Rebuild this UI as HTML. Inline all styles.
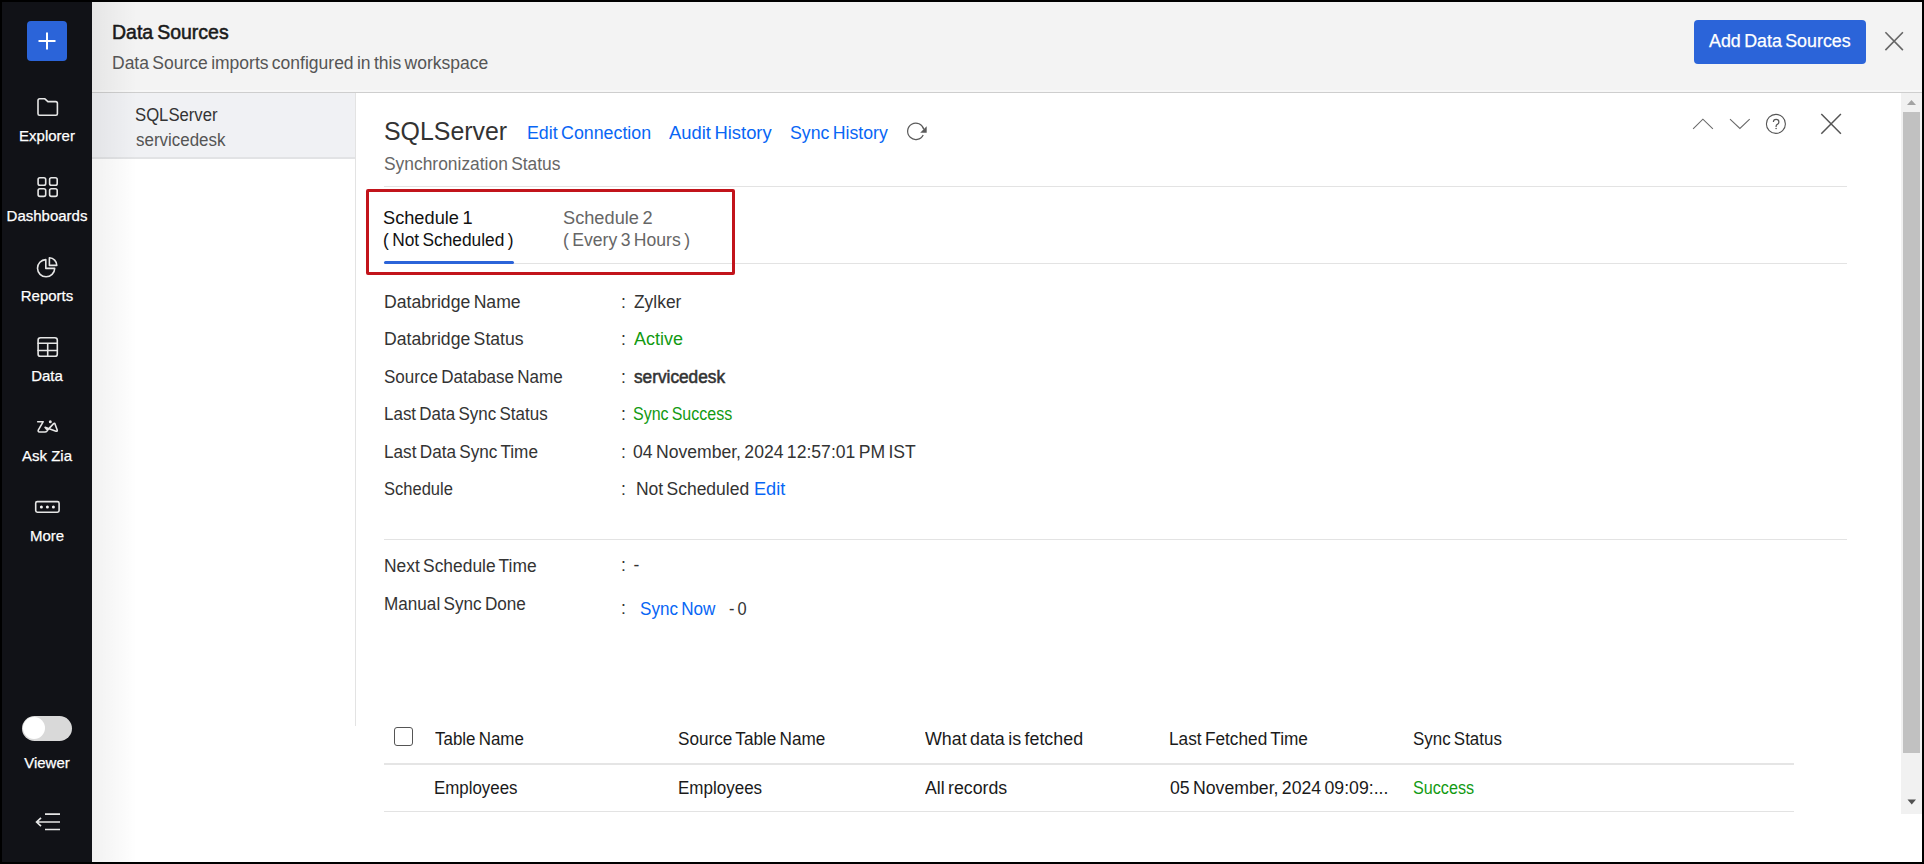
<!DOCTYPE html>
<html><head><meta charset="utf-8">
<style>
*{box-sizing:border-box;margin:0;padding:0}
html,body{width:1924px;height:864px;overflow:hidden;background:#000;font-family:"Liberation Sans",sans-serif;position:relative}
.a{position:absolute}
.t{position:absolute;white-space:nowrap;font-size:17.5px;line-height:17.5px;color:#333;word-spacing:-1.5px;transform-origin:0 0}
#page{left:2px;top:2px;width:1920px;height:860px;background:#fff}
#side{left:2px;top:2px;width:90px;height:860px;background:#111217}
#hdr{left:92px;top:2px;width:1830px;height:91px;background:#f3f3f3;border-bottom:1px solid #cecece;box-shadow:inset 0 -2px 0 #f7f7f7}
#shadow{left:92px;top:2px;width:45px;height:860px;background:linear-gradient(to right,rgba(0,0,0,0.055),rgba(0,0,0,0))}
#list{left:92px;top:93px;width:264px;height:633px;border-right:1px solid #e3e3e3}
#sel{left:92px;top:93px;width:263px;height:66px;background:#f0f1f4;border-bottom:2px solid #e2e3e5}
.lbl{position:absolute;white-space:nowrap;color:#fff;font-size:15px;line-height:15px;text-align:center;width:90px;left:2px;-webkit-text-stroke:0.25px #fff}
.blue{color:#1a6ee6}
.green{color:#1d9a2c}
.ln{position:absolute;height:1px;background:#e3e3e3}
#sb{left:1901px;top:93px;width:21px;height:721px;background:#f1f1f1}
#thumb{left:1903px;top:112px;width:17px;height:641px;background:#c1c1c1}
</style></head><body>
<div class="a" id="page"></div>
<div class="a" id="hdr"></div>
<div class="a" id="list"></div>
<div class="a" id="sel"></div>
<div class="a" id="shadow"></div>
<div class="a" id="side"></div>

<!-- ===== sidebar ===== -->
<div class="a" style="left:27px;top:21px;width:40px;height:40px;background:#2b64d9;border-radius:4px"></div>
<svg class="a" style="left:27px;top:21px" width="40" height="40"><path d="M20 11.5v17M11.5 20h17" stroke="#fff" stroke-width="2"/></svg>

<svg class="a" style="left:0;top:0" width="92" height="864" fill="none" stroke="#e6e6e6" stroke-width="1.6" stroke-linejoin="round" stroke-linecap="round">
  <!-- folder -->
  <path d="M38 100.5q0-1.7 1.7-1.7h5.2l3 2.8h7.8q1.7 0 1.7 1.7v10.4q0 1.5-1.5 1.5h-16.4q-1.5 0-1.5-1.5z"/>
  <!-- dashboards -->
  <rect x="38.1" y="177.7" width="7.6" height="7.6" rx="1.8"/>
  <rect x="49.6" y="177.7" width="7.6" height="7.6" rx="1.8"/>
  <rect x="38.1" y="188.8" width="7.6" height="7.6" rx="1.8"/>
  <rect x="49.6" y="188.8" width="7.6" height="7.6" rx="1.8"/>
  <!-- reports -->
  <path d="M45.8 259.6A8.6 8.6 0 1 0 54.7 268.4H45.8Z"/>
  <path d="M49.4 257.8v7.6h7.4A7.6 7.6 0 0 0 49.4 257.8Z"/>
  <!-- data -->
  <rect x="38.1" y="337.7" width="19.2" height="18.6" rx="2.4"/>
  <path d="M38.1 343.3h19.2M38.1 350.5h19.2M47.7 343.3v13"/>
  <!-- zia -->
  <path d="M37.7 421.7H43.2L38.4 429.8Q37.6 431.9 39.5 432H45Q46.2 432 47 431L48 429.6M45.1 427.3Q46.3 429.5 48 429.6L53.6 423.6Q54.5 422.8 55 423.9L57.2 430Q57.5 431.6 56 431.2Z"/>
  <circle cx="50.3" cy="421.8" r="0.7" fill="#e6e6e6"/>
  <!-- more -->
  <rect x="35.7" y="501.6" width="23.4" height="10.6" rx="1.6"/>
</svg>
<svg class="a" style="left:0;top:0" width="92" height="864" fill="#f4f4f4">
  <circle cx="41.4" cy="507" r="1.5"/><circle cx="47.4" cy="507" r="1.5"/><circle cx="53.4" cy="507" r="1.5"/>
</svg>

<div class="lbl" style="top:128px">Explorer</div>
<div class="lbl" style="top:208px">Dashboards</div>
<div class="lbl" style="top:288px">Reports</div>
<div class="lbl" style="top:368px">Data</div>
<div class="lbl" style="top:448px">Ask Zia</div>
<div class="lbl" style="top:528px">More</div>

<div class="a" style="left:22px;top:716px;width:50px;height:25px;border-radius:13px;background:#d9d9d9"></div>
<div class="a" style="left:23px;top:717px;width:22px;height:22px;border-radius:11px;background:#fff"></div>
<div class="lbl" style="top:755px">Viewer</div>
<svg class="a" style="left:0;top:800px" width="92" height="40" fill="none" stroke="#e6e6e6" stroke-width="1.7">
  <path d="M45 14.2h15M36.5 22h23.5M45 29.5h15M41 17.8l-4.4 4.2l4.4 4.2"/>
</svg>

<!-- header shapes -->
<div class="a" style="left:1694px;top:20px;width:172px;height:44px;background:#2b64d9;border-radius:4px"></div>
<svg class="a" style="left:1880px;top:28px" width="28" height="28" stroke="#666" stroke-width="1.6"><path d="M5.4 4.2L22.9 22.1M22.9 4.2L5.4 22.1"/></svg>

<!-- scrollbar -->
<div class="a" id="sb"></div>
<div class="a" id="thumb"></div>
<svg class="a" style="left:1901px;top:94px" width="21" height="20"><path d="M6 11h9l-4.5-5z" fill="#a3a3a3"/></svg>
<svg class="a" style="left:1901px;top:793px" width="21" height="20"><path d="M6.5 6.5h8.5l-4.25 5z" fill="#505050"/></svg>

<!-- refresh icon -->
<svg class="a" style="left:904px;top:120px" width="26" height="24" fill="none" stroke="#5a5a5a" stroke-width="1.25">
  <path d="M19.2 14.9A8.2 8.2 0 1 1 19.8 9.4"/>
  <path d="M22.7 6.3V12.7H16.2z" fill="#5a5a5a" stroke="none"/>
</svg>

<!-- right icons -->
<svg class="a" style="left:1688px;top:110px" width="160" height="30" fill="none" stroke="#6a6a6a" stroke-width="1.1">
  <path d="M5.1 18.8l9.8-9.6l10 9.6"/>
  <path d="M42 9.2l9.9 9.3l9.8-9.3"/>
  <circle cx="87.9" cy="13.9" r="9.5" stroke="#555" stroke-width="1.1"/>
  <path d="M85.4 12.1q0-2.8 2.7-2.8q2.8 0 2.8 2.6q0 1.6-1.6 2.5q-1.2 0.6-1.2 1.9v0.7" stroke="#555" stroke-width="1.2"/>
  <circle cx="88.1" cy="18.5" r="0.8" fill="#555" stroke="none"/>
  <path d="M133.3 4l19.6 19.7M152.9 4l-19.6 19.7" stroke="#555" stroke-width="1.5"/>
</svg>

<!-- lines -->
<div class="ln" style="left:384px;top:186px;width:1463px"></div>
<div class="ln" style="left:384px;top:263px;width:1463px"></div>
<div class="a" style="left:384px;top:261px;width:130px;height:3px;border-radius:2px;background:#2b64d9"></div>
<div class="a" style="left:366px;top:189px;width:369px;height:86px;border:3px solid #c2141b;border-radius:2px"></div>
<div class="ln" style="left:384px;top:539px;width:1463px"></div>

<!-- table shapes -->
<div class="a" style="left:394px;top:727px;width:19px;height:19px;border:1.3px solid #555;border-radius:3px;background:#fff"></div>
<div class="a" style="left:384px;top:763px;width:1410px;height:2px;background:#e5e5e5"></div>
<div class="ln" style="left:384px;top:811px;width:1410px"></div>

<!-- texts -->
<div class="t" style="left:112.07px;top:21px;font-size:21px;line-height:21px;color:#1a1a1a;font-weight:400;transform:scaleX(0.9280);-webkit-text-stroke:0.55px #1a1a1a">Data Sources</div>
<div class="t" style="left:112.00px;top:55px;font-size:17.5px;line-height:17.5px;color:#555;font-weight:400">Data Source imports configured in this workspace</div>
<div class="t" style="left:135.05px;top:107px;font-size:17.5px;line-height:17.5px;color:#333;font-weight:400;transform:scaleX(0.9535)">SQLServer</div>
<div class="t" style="left:136.00px;top:132px;font-size:17.5px;line-height:17.5px;color:#555;font-weight:400;transform:scaleX(0.9677)">servicedesk</div>
<div class="t" style="left:384.00px;top:119px;font-size:25px;line-height:25px;color:#333;font-weight:400;transform:scaleX(0.9959)">SQLServer</div>
<div class="t" style="left:526.98px;top:125px;font-size:17.5px;line-height:17.5px;color:#0866f5;font-weight:400;transform:scaleX(1.0167)">Edit Connection</div>
<div class="t" style="left:669.00px;top:125px;font-size:17.5px;line-height:17.5px;color:#0866f5;font-weight:400;transform:scaleX(1.0510)">Audit History</div>
<div class="t" style="left:790.49px;top:125px;font-size:17.5px;line-height:17.5px;color:#0866f5;font-weight:400;transform:scaleX(1.0104)">Sync History</div>
<div class="t" style="left:384.01px;top:156px;font-size:17.5px;line-height:17.5px;color:#666;font-weight:400;transform:scaleX(0.9943)">Synchronization Status</div>
<div class="t" style="left:382.99px;top:209px;font-size:18px;line-height:18px;color:#111;font-weight:400;transform:scaleX(1.0115)">Schedule 1</div>
<div class="t" style="left:383.04px;top:231px;font-size:18px;line-height:18px;color:#111;font-weight:400;transform:scaleX(0.9627)">( Not Scheduled )</div>
<div class="t" style="left:562.99px;top:209px;font-size:18px;line-height:18px;color:#666;font-weight:400;transform:scaleX(1.0115)">Schedule 2</div>
<div class="t" style="left:563.02px;top:231px;font-size:18px;line-height:18px;color:#666;font-weight:400;transform:scaleX(0.9766)">( Every 3 Hours )</div>
<div class="t" style="left:383.99px;top:294px;font-size:17.5px;line-height:17.5px;color:#333;font-weight:400;transform:scaleX(1.0075)">Databridge Name</div>
<div class="t" style="left:383.99px;top:331px;font-size:17.5px;line-height:17.5px;color:#333;font-weight:400;transform:scaleX(1.0073)">Databridge Status</div>
<div class="t" style="left:384.03px;top:369px;font-size:17.5px;line-height:17.5px;color:#333;font-weight:400;transform:scaleX(0.9725)">Source Database Name</div>
<div class="t" style="left:384.03px;top:406px;font-size:17.5px;line-height:17.5px;color:#333;font-weight:400;transform:scaleX(0.9702)">Last Data Sync Status</div>
<div class="t" style="left:384.02px;top:444px;font-size:17.5px;line-height:17.5px;color:#333;font-weight:400;transform:scaleX(0.9808)">Last Data Sync Time</div>
<div class="t" style="left:384.06px;top:481px;font-size:17.5px;line-height:17.5px;color:#333;font-weight:400;transform:scaleX(0.9444)">Schedule</div>
<div class="t" style="left:633.80px;top:294px;font-size:17.5px;line-height:17.5px;color:#333;font-weight:400;transform:scaleX(0.9938)">Zylker</div>
<div class="t" style="left:633.50px;top:331px;font-size:17.5px;line-height:17.5px;color:#129a12;font-weight:400;transform:scaleX(1.0277)">Active</div>
<div class="t" style="left:633.50px;top:369px;font-size:17.5px;line-height:17.5px;color:#333;font-weight:400;transform:scaleX(0.9849);-webkit-text-stroke:0.55px #333">servicedesk</div>
<div class="t" style="left:632.69px;top:406px;font-size:17.5px;line-height:17.5px;color:#129a12;font-weight:400;transform:scaleX(0.9150)">Sync Success</div>
<div class="t" style="left:633.30px;top:444px;font-size:17.5px;line-height:17.5px;color:#333;font-weight:400;transform:scaleX(1.0050)">04 November, 2024 12:57:01 PM IST</div>
<div class="t" style="left:635.90px;top:481px;font-size:17.5px;line-height:17.5px;color:#333;font-weight:400">Not Scheduled</div>
<div class="t" style="left:754.26px;top:481px;font-size:17.5px;line-height:17.5px;color:#0866f5;font-weight:400;transform:scaleX(1.0379)">Edit</div>
<div class="t" style="left:384.01px;top:558px;font-size:17.5px;line-height:17.5px;color:#333;font-weight:400;transform:scaleX(0.9934)">Next Schedule Time</div>
<div class="t" style="left:384.02px;top:596px;font-size:17.5px;line-height:17.5px;color:#333;font-weight:400;transform:scaleX(0.9792)">Manual Sync Done</div>
<div class="t" style="left:639.72px;top:601px;font-size:17.5px;line-height:17.5px;color:#0866f5;font-weight:400;transform:scaleX(0.9753)">Sync Now</div>
<div class="t" style="left:728.60px;top:601px;font-size:17.5px;line-height:17.5px;color:#333;font-weight:400;transform:scaleX(0.9368)">- 0</div>
<div class="t" style="left:434.50px;top:731px;font-size:17.5px;line-height:17.5px;color:#1a1a1a;font-weight:400;transform:scaleX(0.9674)">Table Name</div>
<div class="t" style="left:678.42px;top:731px;font-size:17.5px;line-height:17.5px;color:#1a1a1a;font-weight:400;transform:scaleX(0.9799)">Source Table Name</div>
<div class="t" style="left:924.50px;top:731px;font-size:17.5px;line-height:17.5px;color:#1a1a1a;font-weight:400;transform:scaleX(1.0195)">What data is fetched</div>
<div class="t" style="left:1168.61px;top:731px;font-size:17.5px;line-height:17.5px;color:#1a1a1a;font-weight:400;transform:scaleX(0.9857)">Last Fetched Time</div>
<div class="t" style="left:1413.03px;top:731px;font-size:17.5px;line-height:17.5px;color:#1a1a1a;font-weight:400;transform:scaleX(0.9670)">Sync Status</div>
<div class="t" style="left:433.54px;top:780px;font-size:17.5px;line-height:17.5px;color:#1a1a1a;font-weight:400;transform:scaleX(0.9647)">Employees</div>
<div class="t" style="left:678.43px;top:780px;font-size:17.5px;line-height:17.5px;color:#1a1a1a;font-weight:400;transform:scaleX(0.9718)">Employees</div>
<div class="t" style="left:924.50px;top:780px;font-size:17.5px;line-height:17.5px;color:#1a1a1a;font-weight:400;transform:scaleX(1.0123)">All records</div>
<div class="t" style="left:1169.60px;top:780px;font-size:17.5px;line-height:17.5px;color:#1a1a1a;font-weight:400;transform:scaleX(1.0093)">05 November, 2024 09:09:...</div>
<div class="t" style="left:1413.08px;top:780px;font-size:17.5px;line-height:17.5px;color:#129a12;font-weight:400;transform:scaleX(0.9231)">Success</div>
<div class="t" style="left:1709.00px;top:33px;font-size:17.5px;line-height:17.5px;color:#fff;font-weight:400;transform:scaleX(1.0187);-webkit-text-stroke:0.25px #fff">Add Data Sources</div>
<div class="t" style="left:621px;top:294px">:</div>
<div class="t" style="left:621px;top:331px">:</div>
<div class="t" style="left:621px;top:369px">:</div>
<div class="t" style="left:621px;top:406px">:</div>
<div class="t" style="left:621px;top:444px">:</div>
<div class="t" style="left:621px;top:481px">:</div>
<div class="t" style="left:621px;top:557px">:</div>
<div class="t" style="left:621px;top:600px">:</div>
<div class="t" style="left:633.5px;top:557px">-</div>
</body></html>
